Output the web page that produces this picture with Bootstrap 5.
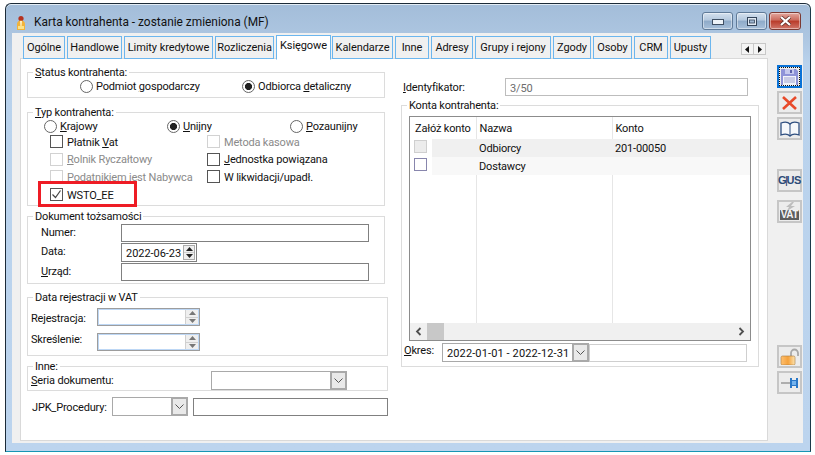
<!DOCTYPE html>
<html lang="pl">
<head>
<meta charset="utf-8">
<title>Karta kontrahenta</title>
<link href="https://cdn.jsdelivr.net/npm/bootstrap@5.3.0/dist/css/bootstrap.min.css" rel="stylesheet">
<style>
html,body{height:100%;overflow:hidden}
body{background:#fff;font-family:Roboto,"Noto Sans","Liberation Sans",sans-serif;font-size:11px;letter-spacing:-.18px;line-height:14px;color:#111}
.win{margin:3px 4px 0 5px;height:449px;border:1px solid #1c2b38;border-bottom-color:#1795b5;border-right-color:#1c3a48;border-radius:6px 6px 0 0;background:linear-gradient(180deg,#a3bdd9 0,#adc6e1 34px,#b9d2ec 60px,#bcd4ee 100%);box-shadow:inset 0 1px 0 #e3edf6}
.tbar{height:29px}
.ttl{font-size:11.9px;letter-spacing:0;margin-left:7px;margin-top:6px}
.appic{margin-left:9px;margin-top:8px}
.wbtns{margin-left:auto;margin-right:9px;margin-top:5px}
.wb{width:31px;height:18px;margin-right:3px;border:1px solid #5f7a98;border-radius:3px;background:linear-gradient(180deg,#d4e1ee 0,#b4c8de 45%,#8eaac8 50%,#a8c0da 100%);box-shadow:inset 0 0 0 1px rgba(255,255,255,.45)}
.wb.cl{width:32px;margin:0 0 0 -1px;border-color:#7c3a33;background:linear-gradient(180deg,#e3a79e 0,#cb6a5c 45%,#b93a29 50%,#d0766a 100%)}
.clnt{margin:0 7px 0 6px;height:410px;background:#f0f0f0}
.mainc{width:755px;padding-left:8px}
.tabsr{height:26px;padding:2px 0 0 3px;gap:2px}
.tbx{height:23px;margin-top:1px;padding:0!important;border:1px solid #6cb6ee!important;background:#f0f0f0;color:#111!important;line-height:22px;text-align:center;border-radius:0;white-space:nowrap;letter-spacing:-.08px}
.tbx.active{height:25px;margin-top:0;background:#fff;border-bottom-color:#fff!important;line-height:20px;z-index:2}
.t1{width:42px}.t2{width:55px}.t3{width:89px}.t4{width:59px}.t5{width:55px}.t6{width:61px;margin-left:-1px}.t7{width:34px}.t8{width:42px}.t9{width:76px}.t10{width:38px}.t11{width:39px}.t12{width:34px}.t13{width:41px}
.tscr{margin-left:auto;margin-top:8px;margin-right:1px;height:12px;width:25px;border:1px solid #c8c8c8;background:#f4f4f4}
.tscr span{flex:1;display:flex;align-items:center;justify-content:center}
.tscr span+span{border-left:1px solid #c8c8c8}
.pnl{height:383px;margin-top:-1px;width:748px;background:#fff;border:1px solid #d9d9d9;padding:6px 6px 0 6px}
.lcol{width:361px}
.rcol{width:358px;margin-left:13px}
.gbox{border:1px solid #dcdcdc;margin:0;padding:0;position:relative;min-width:0}
.gbox>legend{float:none;width:auto;font-size:11px;line-height:16px;margin:0 0 0 5px;padding:0 2px;height:14px}
.w358{width:358px}
.h33{height:33px}.h101{height:101px}.h75{height:75px}.h66{height:66px}.h32{height:32px}.h272{height:269px}
.gap7{margin-top:7px}.gap3{margin-top:3px}.gap6{margin-top:6px}.gap4{margin-top:3px}
.rrow{height:14px}
.pick{display:flex;align-items:center;white-space:nowrap;height:14px;flex:none}
.pick>span:last-child{margin-top:2px}
.rd{display:inline-block;width:13px;height:13px;border:1px solid #666;border-radius:50%;background:#fff;margin-right:3px;flex:none}
.rd.on{background:radial-gradient(circle,#222 0,#222 3.2px,#fff 3.9px)}
.cb{display:inline-flex;width:13px;height:13px;border:1px solid #555;background:#fff;margin-right:4px;flex:none;align-items:center;justify-content:center}
.cb.ds{border-color:#d2d2d2;background:#fff}
.dis{color:#8a8a8a}
.st-a{padding-left:52px}.st-a>.pick{width:162px}
.ty-r{padding-left:16px;display:grid;grid-template-columns:123px 123px auto}
.ty-c{padding-left:22px;display:grid;grid-template-columns:157px auto;grid-auto-rows:17.6px;align-items:center}
.ty-c .pick{height:17.6px}
.mark-r{position:absolute;left:10px;top:62px;width:99px;height:26px;border:3px solid #ee1c25;z-index:3;pointer-events:none}
.fld{height:18px;border:1px solid #808080;background:#fff;padding:0 4px;font-size:11px;letter-spacing:-.1px;line-height:16px;border-radius:0;display:block;font-family:inherit;color:#111}
.fld:focus{outline:0;box-shadow:none;border-color:#808080}
.fld.lt{border-color:#bdbdbd;color:#6d6d6d;box-shadow:none;padding-top:2px}
.spin{display:flex;flex-direction:column;width:13px;height:calc(100% - 2px);margin:1px;border-left:1px solid #d0d0d0;background:#efefef}
.spin span{flex:1;display:flex;align-items:center;justify-content:center}
.spin span+span{border-top:1px solid #d0d0d0}
.dt{width:76px;height:19px;border:1px solid #808080;background:#fff;line-height:19px;padding-left:4px;white-space:nowrap;letter-spacing:-.05px}
.dt .spin{margin-left:auto;margin-right:1px;width:12px;border:1px solid #acacac;flex:none}
.rj{width:103px;height:18px;border:1px solid #9d9d9d;box-shadow:inset 0 0 0 1px #bdd7f5;background:#fff}
.rj .spin{margin-left:auto;width:13px}
.dk-g{padding:1px 0 0 13px;display:grid;grid-template-columns:80px 248px;grid-template-rows:19px 20px 18px;align-items:start}
.dk-g>label{line-height:14px;margin:0;padding-top:2px}
.rj-g{padding:4px 0 0 3px;display:grid;grid-template-columns:66px 103px;grid-template-rows:18px 18px;row-gap:7px;align-items:center}
.lb-a{margin-top:4px}.lb-b{margin-top:-4px}
.combo{height:19px;border:1px solid #a9a9a9;background:#fff;line-height:19px;padding-left:4px;white-space:nowrap;overflow:hidden;letter-spacing:.12px}
.combo .cbtn{margin-left:auto;width:17px;height:19px;margin-top:-1px;margin-right:-1px;border:2px solid #a9a9a9;background:#e9e9e9;display:flex;align-items:center;justify-content:center;flex:none}
.in-g{margin-top:-2px;padding-left:3px;display:flex;align-items:center;height:18px}
.in-g label{width:180px;margin-top:2px}
.w136{width:136px}
.jpk{padding-left:5px;margin-top:6px;height:19px}
.jpk label{width:80px;margin-top:2px}
.w76{width:76px}.w195{width:195px;margin-left:5px}
.idr{margin-top:13px;padding-left:2px;height:18px;margin-bottom:2px}
.idr label{width:102px;margin-top:2px}
.idr .fld{width:243px}
.grd{margin:4px 0 0 7px;width:342px;height:225px;border:1px solid #8c8c8c;display:flex;flex-direction:column;background:#fff}
.grdb{flex:1;min-height:0}
.tblz{width:100%;height:100%;border-collapse:collapse;table-layout:fixed;margin:0;font-size:11px;color:#111}
.cw22{width:22px}.cw44{width:44px}.cw136{width:136px}
.tblz td,.tblz th{padding:2px 0 0;border:0;font-weight:400;vertical-align:middle;line-height:14px}
.tblz .hd th{height:22px;padding-left:3px;border-right:1px solid #e6e6e6}
.tblz .hd th:first-child{padding-left:5px;white-space:nowrap}
.tblz .rw td{height:18px;padding-left:3px}
.rw1 td.bgc{background:#f0f0f0}
.rw2 td.bgc{background:#f8f8f8}
.tblz td.ck{padding-left:4px!important;padding-top:0}
.tblz .fill td{border-right:1px solid #e6e6e6}
.tblz .fill td:first-child{border-right:0}
.tblz td:last-child,.tblz th:last-child{border-right:0!important}
.cb.g1{border-color:#cfcfcf;background:#ececec}
.cb.g2{border-color:#8886ad}
.sbar{height:17px;background:#f0f0f0;flex:none}
.sth{width:17px;height:17px;background:#c8c8c8}
.sar{width:17px;display:flex;align-items:center;justify-content:center;flex:none}
.okr{padding-left:2px;margin-top:2px;height:19px}
.okr label{width:38px;margin-top:-3px}
.okc{width:147px}
.oki{width:158px;height:18px;border-color:#cfcfcf}
.tool{width:25px;margin-left:10px;padding-top:32px}
.tb{width:25px;height:23px;border:2px solid #c6c6c6;background:#ececec;margin-bottom:3px;padding:0;display:flex;align-items:center;justify-content:center;position:relative}
.tb.foc{border:2px solid #0a72d6;outline:1px dotted #111;outline-offset:-3px}
.sp29{margin-top:29px}.sp6{margin-top:8px}.sp123{margin-top:122px}
.gus{font-family:"Liberation Sans",sans-serif;font-weight:700;font-size:11px;letter-spacing:-.4px;color:#2b4a78;line-height:19px}
.gus i{font-style:normal;color:#1c2f55;font-weight:400;margin:0 -1px}
.vat{font-family:"Liberation Sans",sans-serif;font-weight:700;font-size:10px;letter-spacing:-.3px;color:#f4f4f4;background:#5d5d5d;line-height:10px;padding:0 1px;margin-top:6px}
.bolt{position:absolute;left:6px;top:0}
</style>
</head>
<body>
<div class="win">
  <div class="tbar d-flex align-items-center">
    <svg class="appic" width="12" height="16" viewBox="0 0 12 16"><circle cx="6" cy="3.5" r="2.6" fill="#b5321f"/><path d="M2 15V9c0-2.5 2-3.5 4-3.5S10 6.500 10 9v6z" fill="#f2b33a"/><path d="M5 6h2l-.5 5h-1z" fill="#fff4c8"/><rect x="3" y="11" width="6" height="3" fill="#fbe38a"/></svg>
    <span class="ttl">Karta kontrahenta - zostanie zmieniona (MF)</span>
    <div class="wbtns d-flex">
      <div class="wb d-flex align-items-center justify-content-center"><svg width="12" height="7" viewBox="0 0 12 7"><rect x=".5" y="1.500" width="11" height="5" fill="#eef3f8" stroke="#3f4f63"/></svg></div>
      <div class="wb d-flex align-items-center justify-content-center"><svg width="10" height="9" viewBox="0 0 10 9"><rect x=".5" y=".5" width="9" height="8" fill="#dfe8f2" stroke="#33445a"/><rect x="2.500" y="3" width="5" height="3" fill="#9fb6d0" stroke="#33445a" stroke-width=".8"/></svg></div>
      <div class="wb cl d-flex align-items-center justify-content-center"><svg width="13" height="10" viewBox="0 0 13 10"><path d="M2 1l9 8M11 1L2 9" stroke="#5a2a24" stroke-width="3.600"/><path d="M2 1l9 8M11 1L2 9" stroke="#fff" stroke-width="2.300"/></svg></div>
    </div>
  </div>
  <div class="clnt d-flex">
    <div class="mainc">
      <ul class="nav tabsr d-flex flex-nowrap">
        <li class="tbx nav-item t1">Ogólne</li><li class="tbx nav-item t2">Handlowe</li><li class="tbx nav-item t3">Limity kredytowe</li><li class="tbx nav-item t4">Rozliczenia</li><li class="tbx nav-item t5 active">Księgowe</li><li class="tbx nav-item t6">Kalendarze</li><li class="tbx nav-item t7">Inne</li><li class="tbx nav-item t8">Adresy</li><li class="tbx nav-item t9">Grupy i rejony</li><li class="tbx nav-item t10">Zgody</li><li class="tbx nav-item t11">Osoby</li><li class="tbx nav-item t12">CRM</li><li class="tbx nav-item t13">Upusty</li>
        <li class="tscr d-flex"><span><svg width="5" height="7" viewBox="0 0 5 7"><path d="M4 0v7L0 3.500z" fill="#111"/></svg></span><span><svg width="5" height="7" viewBox="0 0 5 7"><path d="M1 0v7l4-3.500z" fill="#111"/></svg></span></li>
      </ul>
      <div class="pnl d-flex">
        <div class="lcol">
          <fieldset class="gbox w358 h33">
            <legend><u>S</u>tatus kontrahenta:</legend>
            <div class="st-a d-flex rrow">
              <label class="pick"><span class="rd"></span><span>Podmiot <u>g</u>ospodarczy</span></label>
              <label class="pick"><span class="rd on"></span><span>Odbiorca <u>d</u>etaliczny</span></label>
            </div>
          </fieldset>
          <fieldset class="gbox w358 h101 gap7">
            <legend><u>T</u>yp kontrahenta:</legend>
            <div class="ty-r rrow">
              <label class="pick"><span class="rd"></span><span><u>K</u>rajowy</span></label>
              <label class="pick"><span class="rd on"></span><span><u>U</u>nijny</span></label>
              <label class="pick"><span class="rd"></span><span><u>P</u>ozaunijny</span></label>
            </div>
            <div class="ty-c">
              <label class="pick"><span class="cb"></span><span>Płatnik <u>V</u>at</span></label>
              <label class="pick dis"><span class="cb ds"></span><span>Metoda kasowa</span></label>
              <label class="pick dis"><span class="cb ds"></span><span><u>R</u>olnik Ryczałtowy</span></label>
              <label class="pick"><span class="cb"></span><span><u>J</u>ednostka powiązana</span></label>
              <label class="pick dis"><span class="cb ds"></span><span>Podatnikiem jest Nabywca</span></label>
              <label class="pick"><span class="cb"></span><span>W likwidacji/upadł.</span></label>
              <label class="pick"><span class="cb"><svg width="11" height="11" viewBox="0 0 11 11"><path d="M1.500 5.500l3 3 5-7" fill="none" stroke="#444" stroke-width="1.200"/></svg></span><span>WSTO_EE</span></label>
            </div>
            <div class="mark-r"></div>
          </fieldset>
          <fieldset class="gbox w358 h75 gap3">
            <legend>Dokument tożsamości</legend>
            <div class="dk-g">
              <label>Numer:</label><input class="fld form-control" type="text" aria-label="Numer">
              <label>Data:</label><div class="dt d-flex">2022-06-23<div class="spin"><span><svg width="7" height="4" viewBox="0 0 7 4"><path d="M3.500 0L7 4H0z" fill="#222"/></svg></span><span><svg width="7" height="4" viewBox="0 0 7 4"><path d="M3.500 4L7 0H0z" fill="#222"/></svg></span></div></div>
              <label><u>U</u>rząd:</label><input class="fld form-control" type="text" aria-label="Urząd">
            </div>
          </fieldset>
          <fieldset class="gbox h66 gap6">
            <legend>Data rejestracji w VAT</legend>
            <div class="rj-g">
              <label class="lb-a">Rejestracja:</label><div class="rj d-flex"><div class="spin"><span><svg width="7" height="4" viewBox="0 0 7 4"><path d="M3.500 0L7 4H0z" fill="#777"/></svg></span><span><svg width="7" height="4" viewBox="0 0 7 4"><path d="M3.500 4L7 0H0z" fill="#777"/></svg></span></div></div>
              <label class="lb-b">Skreślenie:</label><div class="rj d-flex"><div class="spin"><span><svg width="7" height="4" viewBox="0 0 7 4"><path d="M3.500 0L7 4H0z" fill="#777"/></svg></span><span><svg width="7" height="4" viewBox="0 0 7 4"><path d="M3.500 4L7 0H0z" fill="#777"/></svg></span></div></div>
            </div>
          </fieldset>
          <fieldset class="gbox h32 gap4">
            <legend>Inne:</legend>
            <div class="in-g">
              <label><u>S</u>eria dokumentu:</label>
              <div class="combo w136 d-flex"><div class="cbtn"><svg width="9" height="5" viewBox="0 0 9 5"><path d="M.5.5l4 4 4-4" fill="none" stroke="#555"/></svg></div></div>
            </div>
          </fieldset>
          <div class="jpk d-flex align-items-center">
            <label>JPK_Procedury:</label>
            <div class="combo w76 d-flex"><div class="cbtn"><svg width="9" height="5" viewBox="0 0 9 5"><path d="M.5.5l4 4 4-4" fill="none" stroke="#555"/></svg></div></div>
            <input class="fld form-control w195" type="text" aria-label="JPK">
          </div>
        </div>
        <div class="rcol">
          <div class="idr d-flex align-items-center">
            <label><u>I</u>dentyfikator:</label>
            <input class="fld lt form-control" type="text" value="3/50" aria-label="Identyfikator">
          </div>
          <fieldset class="gbox h272">
            <legend>Konta kontrahenta:</legend>
            <div class="grd">
              <div class="grdb">
                <table class="tblz">
                  <colgroup><col class="cw22"><col class="cw44"><col class="cw136"><col></colgroup>
                  <tr class="hd"><th colspan="2">Załóż konto</th><th>Nazwa</th><th>Konto</th></tr>
                  <tr class="rw rw1"><td class="ck"><span class="cb g1"></span></td><td class="bgc"></td><td class="bgc">Odbiorcy</td><td class="bgc">201-00050</td></tr>
                  <tr class="rw rw2"><td class="ck"><span class="cb g2"></span></td><td class="bgc"></td><td class="bgc">Dostawcy</td><td class="bgc"></td></tr>
                  <tr class="fill"><td></td><td></td><td></td><td></td></tr>
                </table>
              </div>
              <div class="sbar d-flex">
                <div class="sar"><svg width="7" height="9" viewBox="0 0 7 9"><path d="M5.500 1L2 4.500 5.500 8" fill="none" stroke="#505050" stroke-width="1.800"/></svg></div>
                <div class="sth"></div>
                <div class="sar ms-auto"><svg width="7" height="9" viewBox="0 0 7 9"><path d="M1.500 1L5 4.500 1.500 8" fill="none" stroke="#505050" stroke-width="1.800"/></svg></div>
              </div>
            </div>
            <div class="okr d-flex align-items-center">
              <label><u>O</u>kres:</label>
              <div class="combo okc d-flex">2022-01-01 - 2022-12-31<div class="cbtn"><svg width="9" height="5" viewBox="0 0 9 5"><path d="M.5.5l4 4 4-4" fill="none" stroke="#555"/></svg></div></div>
              <input class="fld oki form-control" type="text" aria-label="Okres">
            </div>
          </fieldset>
        </div>
      </div>
    </div>
    <div class="tool">
      <div class="tb foc"><svg width="17" height="16" viewBox="0 0 17 16"><path d="M0 0h15l2 2v14H0z" fill="#8f93d8"/><rect x="4" y="0" width="9" height="5" fill="#c6c9ee"/><rect x="9" y="1" width="2" height="3" fill="#5c60a8"/><rect x="2" y="7" width="13" height="9" fill="#f2f2fa"/><path d="M3 9h11M3 11h11M3 13h11" stroke="#a0a4d0"/></svg></div>
      <div class="tb"><svg width="17" height="16" viewBox="0 0 17 16"><path d="M2 2l13 12M15 2L2 14" stroke="#e84a2a" stroke-width="2.600"/></svg></div>
      <div class="tb"><svg width="20" height="16" viewBox="0 0 20 16"><path d="M10 3C8 1 4 1 1 2v12c3-1 7-1 9 1 2-2 6-2 9-1V2c-3-1-7-1-9 1z" fill="#f6f8fb" stroke="#2f4f80" stroke-width="1.300"/><path d="M10 3v12" stroke="#2f4f80"/></svg></div>
      <div class="tb sp29"><span class="gus">G<i>|</i>US</span></div>
      <div class="tb sp6"><svg class="bolt" width="11" height="9" viewBox="0 0 11 9"><path d="M7 0L1 5h3L2 9l8-5H6l3-4z" fill="#bdbdbd"/></svg><span class="vat">VAT</span></div>
      <div class="tb sp123"><svg width="20" height="17" viewBox="0 0 20 17"><defs><linearGradient id="lk" x1="0" x2="1"><stop offset="0" stop-color="#ffc070"/><stop offset=".5" stop-color="#f5a23c"/><stop offset="1" stop-color="#fbe3b0"/></linearGradient></defs><path d="M11 8V5a3.500 3.500 0 0 1 7 0v3" fill="none" stroke="#a8a8a8" stroke-width="1.800"/><rect x="1" y="8" width="14" height="9" rx="1.500" fill="url(#lk)" stroke="#a8783c" stroke-width=".6"/></svg></div>
      <div class="tb"><svg width="20" height="14" viewBox="0 0 20 14"><path d="M1 7h10" stroke="#9a9a9a" stroke-width="1.500"/><path d="M10 2h2v2h4V2h2v10h-2v-2h-4v2h-2z" fill="#2a78c8"/><rect x="12" y="5" width="4" height="4" fill="#74b3ee"/></svg></div>
    </div>
  </div>
</div>
<script src="https://cdn.jsdelivr.net/npm/bootstrap@5.3.0/dist/js/bootstrap.bundle.min.js"></script>
</body>
</html>
